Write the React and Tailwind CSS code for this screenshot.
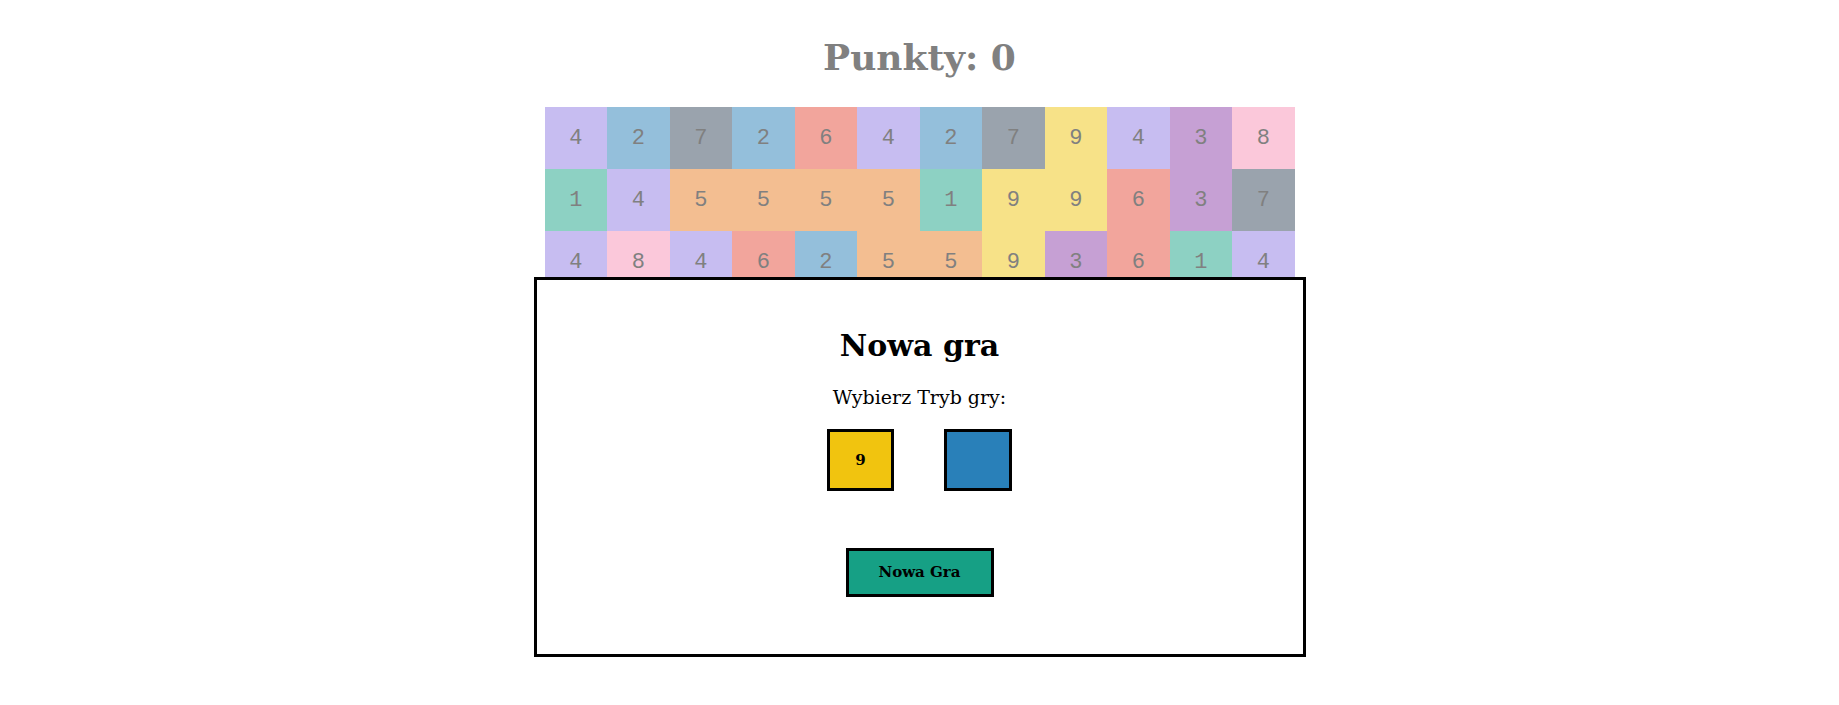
import React from "react";

const rows = [
  [4, 2, 7, 2, 6, 4, 2, 7, 9, 4, 3, 8],
  [1, 4, 5, 5, 5, 5, 1, 9, 9, 6, 3, 7],
  [4, 8, 4, 6, 2, 5, 5, 9, 3, 6, 1, 4],
];

// kolor klocka zależy od cyfry
const tileColors = {
  1: "bg-[#8dd1c3]",
  2: "bg-[#94bfdb]",
  3: "bg-[#c6a0d4]",
  4: "bg-[#c7bdf1]",
  5: "bg-[#f3be91]",
  6: "bg-[#f2a59c]",
  7: "bg-[#9aa3ad]",
  8: "bg-[#fbc8da]",
  9: "bg-[#f7e288]",
};

const serif = "font-['DejaVu_Serif',serif]";

function Tile({ value }) {
  return (
    <div
      className={`${tileColors[value]} h-[62px] flex items-center justify-center font-['Liberation_Mono',monospace] text-[22px] text-[#808080]`}
    >
      {value}
    </div>
  );
}

function NewGameModal() {
  return (
    <div className="absolute left-1/2 top-[170px] -translate-x-1/2 w-[772px] h-[380px] bg-white border-[3px] border-black flex flex-col items-center">
      <h2 className={`${serif} font-bold text-[30px] leading-[36px] text-black mt-[48px]`}>
        Nowa gra
      </h2>
      <p className={`${serif} text-[19px] leading-[24px] text-black mt-[21px]`}>
        Wybierz Tryb gry:
      </p>
      <div className="flex gap-[50px] mt-5">
        <button className={`${serif} font-bold text-[15px] w-[67px] h-[62px] bg-[#f1c40f] border-[3px] border-black flex items-center justify-center`}>
          9
        </button>
        <button className="w-[68px] h-[62px] bg-[#2980b9] border-[3px] border-black" />
      </div>
      <button className={`${serif} font-bold text-[15px] mt-[57px] w-[148px] h-[49px] bg-[#16a085] border-[3px] border-black text-black`}>
        Nowa Gra
      </button>
    </div>
  );
}

export default function App() {
  return (
    <div className="min-h-[705px] bg-white flex flex-col items-center pt-[36px]">
      <h1 className={`${serif} font-bold text-[36px] leading-[42px] text-[#808080] mb-[29px]`}>
        Punkty: 0
      </h1>
      <div className="relative w-[750px]">
        <div className="grid grid-cols-12">
          {rows.map((row, r) =>
            row.map((v, c) => <Tile key={`${r}-${c}`} value={v} />)
          )}
        </div>
        <NewGameModal />
      </div>
    </div>
  );
}
